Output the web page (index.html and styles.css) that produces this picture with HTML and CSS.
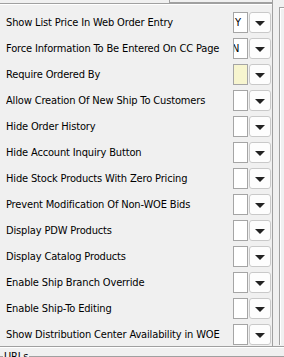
FILE: index.html
```html
<!DOCTYPE html>
<html lang="en">
<head>
    <meta charset="UTF-8">
    <meta name="viewport" content="width=device-width, initial-scale=1.0">
    <title>Web Order Settings</title>
    <link rel="stylesheet" href="styles.css">
</head>
<body>
    <div class="top">
        <div class="top-box"></div>
    </div>
    <div class="split">
        <div class="panel">
            <div class="row"><span class="label">Show List Price In Web Order Entry</span><span class="field">Y</span><span class="drop"></span></div>
            <div class="row"><span class="label">Force Information To Be Entered On CC Page</span><span class="field"><span class="clip">N</span></span><span class="drop"></span></div>
            <div class="row"><span class="label">Require Ordered By</span><span class="field required"></span><span class="drop"></span></div>
            <div class="row"><span class="label">Allow Creation Of New Ship To Customers</span><span class="field"></span><span class="drop"></span></div>
            <div class="row"><span class="label">Hide Order History</span><span class="field"></span><span class="drop"></span></div>
            <div class="row"><span class="label">Hide Account Inquiry Button</span><span class="field"></span><span class="drop"></span></div>
            <div class="row"><span class="label">Hide Stock Products With Zero Pricing</span><span class="field"></span><span class="drop"></span></div>
            <div class="row"><span class="label">Prevent Modification Of Non-WOE Bids</span><span class="field"></span><span class="drop"></span></div>
            <div class="row"><span class="label">Display PDW Products</span><span class="field"></span><span class="drop"></span></div>
            <div class="row"><span class="label">Display Catalog Products</span><span class="field"></span><span class="drop"></span></div>
            <div class="row"><span class="label">Enable Ship Branch Override</span><span class="field"></span><span class="drop"></span></div>
            <div class="row"><span class="label">Enable Ship-To Editing</span><span class="field"></span><span class="drop"></span></div>
            <div class="row"><span class="label">Show Distribution Center Availability in WOE</span><span class="field"></span><span class="drop"></span></div>
        </div>
        <div class="side"></div>
    </div>
    <fieldset class="urls">
        <legend>URLs</legend>
    </fieldset>
</body>
</html>
```

FILE: styles.css
```css
body {
    margin: 0;
    width: 284px;
    height: 357px;
    overflow: hidden;
    background-color: #f0f0f0;
    font-family: "DejaVu Sans Condensed", "DejaVu Sans", sans-serif;
    font-size: 11px;
    letter-spacing: -0.15px;
    color: #000;
}

.top {
    height: 3px;
    width: 273px;
}

.top-box {
    margin-left: 169px;
    width: 102px;
    height: 2px;
    border: 1px solid #a0a0a0;
    border-top: none;
    background-color: #f0f0f0;
}

.split {
    display: flex;
    border-bottom: 1px solid #a0a0a0;
    box-shadow: 0 1px 0 #fff;
}

.panel {
    width: 273px;
    box-sizing: border-box;
    border-top: 1px solid #a0a0a0;
    border-right: 1px solid #a0a0a0;
    box-shadow: inset 0 1px 0 #fff;
    padding: 8px 1px 1px 0;
    display: flex;
    flex-direction: column;
    gap: 5px;
}

.row {
    display: flex;
    align-items: center;
    height: 21px;
    padding-left: 6px;
}

.label {
    flex: 1;
    white-space: nowrap;
    overflow: hidden;
}

.field {
    width: 15px;
    height: 21px;
    box-sizing: border-box;
    border: 1px solid #a5a5a5;
    background-color: #fff;
    line-height: 19px;
    padding-left: 1px;
    overflow: hidden;
    white-space: nowrap;
}

.field.required {
    background-color: #f7f5cf;
}

.clip {
    margin-left: -3px;
}

.drop {
    width: 22px;
    height: 21px;
    box-sizing: border-box;
    margin-left: 1px;
    border: 1px solid #c9c9c9;
    border-radius: 3px;
    background-color: #fdfdfd;
    display: flex;
    align-items: center;
    justify-content: center;
}

.drop::after {
    content: "";
    border-left: 5px solid transparent;
    border-right: 5px solid transparent;
    border-top: 5px solid #222;
    margin-top: 1px;
}

.side {
    flex: 1;
    margin: 4px 0 1px 6px;
    border-left: 1px solid #a0a0a0;
    border-top: 1px solid #a0a0a0;
    box-shadow: inset 1px 1px 0 #fff;
}

.urls {
    margin: 3px 0 0 0;
    padding: 0;
    border: none;
    border-top: 1px solid #a0a0a0;
}

.urls legend {
    margin-left: 3px;
    padding: 0 1px;
    line-height: 13px;
}
```
